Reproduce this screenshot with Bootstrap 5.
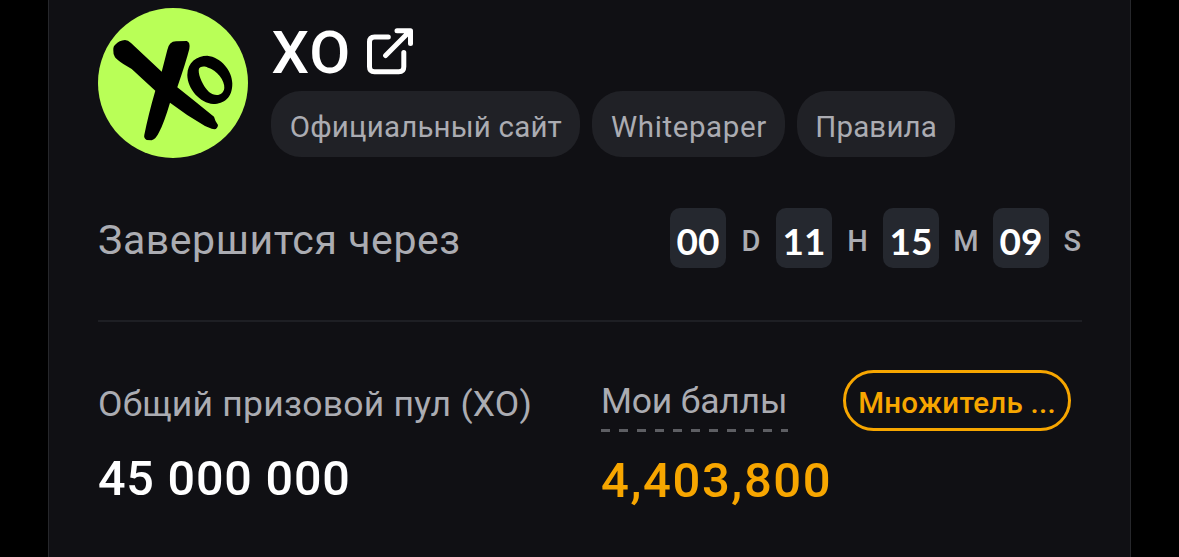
<!DOCTYPE html>
<html lang="ru">
<head>
  <meta charset="UTF-8" />
  <meta name="viewport" content="width=device-width, initial-scale=1" />
  <title>XO</title>
  <!-- Bootstrap CSS -->
  <link
    href="https://cdn.jsdelivr.net/npm/bootstrap@5.3.0/dist/css/bootstrap.min.css"
    rel="stylesheet"
  />
  <style>
    body {
      background-color: #000;
      color: #abacb2;
      font-family: Roboto, "Noto Sans", sans-serif;
      line-height: 1;
    }
    .pool-panel {
      width: 1083px;
      height: 557px;
      margin-left: 48px;
      padding: 8px 48px 0 49px;
      background-color: #101014;
      border: solid #26272b;
      border-width: 0 1px;
    }
    .token-logo { width: 150px; height: 150px; }
    .token-head { height: 150px; gap: 23.4px; }
    .token-title {
      height: 83.4px;
      padding-top: 7px;
      gap: 14px;
      font-size: 59.5px;
      font-weight: 500;
      letter-spacing: 1px;
    }
    .token-name { padding-top: 2px; }
    .token-links { gap: 12px; }
    .token-link {
      height: 66px;
      padding: 7px 0 0;
      border-radius: 30px;
      background-color: #202126;
      color: #abacb2;
      font-size: 29.5px;
      text-decoration: none;
      letter-spacing: 0.18px;
    }
    .link-site { width: 309px; }
    .link-paper { width: 193px; letter-spacing: 0.6px; }
    .link-rules { width: 157.5px; }
    .timer-row { height: 60px; margin-top: 50px; }
    .timer-label { font-size: 41px; padding-top: 4px; letter-spacing: 0.57px; }
    .timer-cell {
      width: 56px;
      height: 60px;
      padding-top: 5px;
      border-radius: 10px;
      background-color: #25282f;
      font-family: Lato, Roboto, sans-serif;
      font-size: 37px;
      font-weight: 700;
    }
    .timer-unit { font-size: 29px; font-weight: 500; padding-top: 7px; }
    .timer-unit:last-child { padding-right: 1px; }
    .pool-line { height: 2px; margin-top: 52px; background-color: #1e1f24; }
    .stat-label { font-size: 35.5px; letter-spacing: 0.24px; }
    .stat-value { font-size: 48.5px; font-weight: 500; letter-spacing: 0.8px; }
    .boost-btn {
      width: 228px;
      height: 61px;
      margin-left: 55px;
      border: 3px solid #f7a600;
      color: #f7a600;
      font-size: 29.5px;
      font-weight: 500;
      letter-spacing: 0.25px;
      padding: 6px 0 0;
    }
    .points-value { color: #f7a600; font-size: 49px; letter-spacing: 1.6px; }
    .total-col { width: 503px; padding-top: 65px; }
    .points-col { padding-top: 48px; }
    .points-label {
      width: 187px;
      height: 62px;
      padding-top: 1px;
      letter-spacing: -0.2px;
      background: repeating-linear-gradient(90deg, #5d5e63 0 9px, transparent 9px 18px) 0 100% / 100% 3px no-repeat;
    }
  </style>
</head>
<body>
  <main class="pool-panel">
    <header class="token-head d-flex">
      <svg class="token-logo flex-shrink-0" viewBox="0 0 150 150">
        <circle cx="75" cy="75" r="75" fill="#b9ff57" />
        <!-- crossed brush strokes -->
        <path d="M15.3 42Q15 38 18 36Q21 32.500 27 32Q30 32 33 35L63.700 63.700L69.300 42Q71 33.500 78 33.300L88.700 33Q92.500 34 91.300 41Q88 54 79.300 79.300L95.300 92L116 108.700Q117 113 120 117Q119.500 122.500 113.700 120.700L107 118Q88 107 72 94.700Q66 115 61.300 123.700Q58 131 53.700 132.300L48.700 132Q45.500 130 46.300 127Q50 108 57.300 82.700L43.700 70.300L33.700 61L25.300 56Q18 51 17 49.300Q15 46 15.300 42Z" />
        <!-- tilted ring -->
        <path fill-rule="evenodd" d="M89.300 67C89.500 54 99 47.700 109.300 47.700C123 49 134.300 63 134.300 75.300C134.500 90 126 96 115.300 96C102 95 89.500 81 89.300 67ZM100.700 62C101 58 107 58 109.500 59.500C119 62 127 73 126.300 80C125.500 88 117 89 111 84C105 78 100.500 68 100.700 62Z" />
      </svg>
      <div>
        <div class="token-title d-flex align-items-center text-white">
          <span class="token-name">XO</span>
          <svg width="50" height="50" viewBox="0 0 50 50" fill="none" stroke="#fff" stroke-width="5" stroke-linecap="round" stroke-linejoin="round">
            <path d="M23.300 9H9.500q-5 0-5 5v24.700q0 5 5 5h24.300q5 0 5-5V24.500M20.600 27.500L44.500 3.500M32 2.700H45.500V15.500" />
          </svg>
        </div>
        <nav class="token-links d-flex">
          <a class="token-link link-site d-flex align-items-center justify-content-center" href="#">Официальный сайт</a>
          <a class="token-link link-paper d-flex align-items-center justify-content-center" href="#">Whitepaper</a>
          <a class="token-link link-rules d-flex align-items-center justify-content-center" href="#">Правила</a>
        </nav>
      </div>
    </header>

    <section class="timer-row d-flex align-items-center justify-content-between">
      <div class="timer-label">Завершится через</div>
      <div class="d-flex align-items-center">
        <div class="timer-cell d-flex align-items-center justify-content-center text-white">00</div>
        <div class="timer-unit text-center" style="width:50px">D</div>
        <div class="timer-cell d-flex align-items-center justify-content-center text-white">11</div>
        <div class="timer-unit text-center" style="width:51px">H</div>
        <div class="timer-cell d-flex align-items-center justify-content-center text-white">15</div>
        <div class="timer-unit text-center" style="width:54px">M</div>
        <div class="timer-cell d-flex align-items-center justify-content-center text-white">09</div>
        <div class="timer-unit text-end" style="width:33px">S</div>
      </div>
    </section>

    <div class="pool-line"></div>

    <section class="d-flex">
      <div class="total-col">
        <div class="stat-label">Общий призовой пул (XO)</div>
        <div class="stat-value text-white mt-4 pt-2">45 000 000</div>
      </div>
      <div class="points-col">
        <div class="d-flex align-items-start">
          <div class="stat-label points-label d-flex align-items-center text-nowrap">Мои баллы</div>
          <button type="button" class="boost-btn btn rounded-pill d-flex align-items-center justify-content-center">Множитель ...</button>
        </div>
        <div class="stat-value points-value mt-4">4,403,800</div>
      </div>
    </section>
  </main>
  <!-- Bootstrap Bundle JS (include Popper) -->
  <script src="https://cdn.jsdelivr.net/npm/bootstrap@5.3.0/dist/js/bootstrap.bundle.min.js"></script>
</body>
</html>
